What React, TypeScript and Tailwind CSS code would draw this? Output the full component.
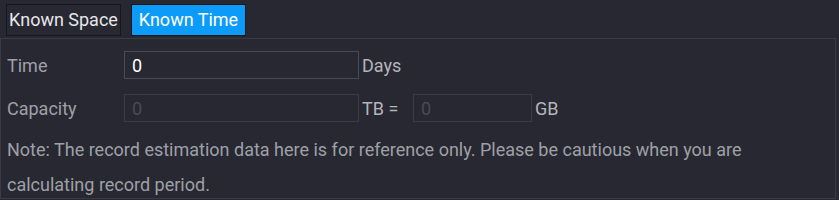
import { useState } from 'react'

const App = () => {
  const [tab, setTab] = useState<'space' | 'time'>('time')
  const [days, setDays] = useState('0')

  return (
    <div className="w-[839px] h-[200px] bg-[#272832] font-['Roboto','Liberation_Sans',sans-serif] font-normal text-[18px] overflow-hidden">
      <div className="flex gap-[10px] pl-[6px] pt-[4px]">
        <button
          onClick={() => setTab('space')}
          className={`h-[32px] w-[115px] px-0 border text-[18px] leading-none whitespace-nowrap ${
            tab === 'space' ? 'bg-[#0d9bf9] border-[#16171c] text-white' : 'bg-[#272832] border-[#16171c] text-[#e6e6e8]'
          }`}
        >
          Known Space
        </button>
        <button
          onClick={() => setTab('time')}
          className={`h-[32px] w-[115px] px-0 border text-[18px] leading-none whitespace-nowrap ${
            tab === 'time' ? 'bg-[#0d9bf9] border-[#16171c] text-white' : 'bg-[#272832] border-[#16171c] text-[#e6e6e8]'
          }`}
        >
          Known Time
        </button>
      </div>

      <div className="mt-[2px] w-[836px] h-[161px] border border-[#393a44] pl-[6px] pt-[12px]">
        <div className="flex items-center h-[28px]">
          <span className="w-[117px] text-[#9fa0a6]">Time</span>
          <input
            value={days}
            onChange={(e) => setDays(e.target.value)}
            className="w-[235px] h-[28px] bg-transparent border border-[#494a54] pl-[7px] text-white outline-none"
          />
          <span className="ml-[3px] text-[#b4b5bb]">Days</span>
        </div>

        <div className="flex items-center h-[28px] mt-[15px]">
          <span className="w-[117px] text-[#9fa0a6]">Capacity</span>
          <input
            disabled
            value="0"
            className="w-[235px] h-[28px] bg-transparent border border-[#3b3c46] pl-[7px] text-[#4a4b55] outline-none"
          />
          <span className="ml-[3px] w-[51px] text-[#b4b5bb]">TB =</span>
          <input
            disabled
            value="0"
            className="w-[119px] h-[28px] bg-transparent border border-[#3b3c46] pl-[7px] text-[#4a4b55] outline-none"
          />
          <span className="ml-[3px] text-[#b4b5bb]">GB</span>
        </div>

        <p className="mt-[10px] w-[780px] leading-[35px] text-[#9fa0a6]">
          Note: The record estimation data here is for reference only. Please be cautious when you are calculating record period.
        </p>
      </div>
    </div>
  )
}

export default App
